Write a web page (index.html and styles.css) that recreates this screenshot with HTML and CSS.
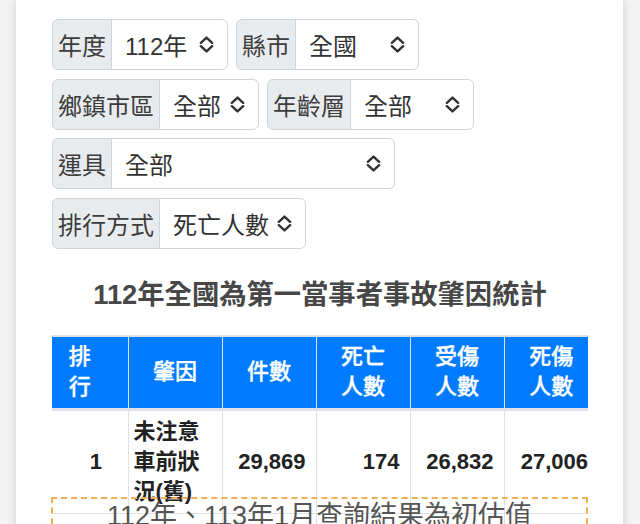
FILE: index.html
```html
<!DOCTYPE html>
<html lang="zh-Hant">
<head>
<meta charset="utf-8">
<title>事故肇因統計</title>
<link rel="stylesheet" href="styles.css">
</head>
<body>
<div class="panel">
  <div class="filters">
    <div class="ig">
      <span class="ig-label">年度</span>
      <div class="ig-select sel-year"><span>112年</span><svg class="chev" viewBox="0 0 16 18" width="15" height="17"><path d="M2 7.2 L8 1.6 L14 7.2 M2 10.8 L8 16.4 L14 10.8" fill="none" stroke="#333" stroke-width="2.6" stroke-linecap="round" stroke-linejoin="round"/></svg></div>
    </div>
    <div class="ig">
      <span class="ig-label">縣市</span>
      <div class="ig-select sel-city"><span>全國</span><svg class="chev" viewBox="0 0 16 18" width="15" height="17"><path d="M2 7.2 L8 1.6 L14 7.2 M2 10.8 L8 16.4 L14 10.8" fill="none" stroke="#333" stroke-width="2.6" stroke-linecap="round" stroke-linejoin="round"/></svg></div>
    </div>
    <div class="ig">
      <span class="ig-label">鄉鎮市區</span>
      <div class="ig-select sel-town"><span>全部</span><svg class="chev" viewBox="0 0 16 18" width="15" height="17"><path d="M2 7.2 L8 1.6 L14 7.2 M2 10.8 L8 16.4 L14 10.8" fill="none" stroke="#333" stroke-width="2.6" stroke-linecap="round" stroke-linejoin="round"/></svg></div>
    </div>
    <div class="ig">
      <span class="ig-label">年齡層</span>
      <div class="ig-select sel-age"><span>全部</span><svg class="chev" viewBox="0 0 16 18" width="15" height="17"><path d="M2 7.2 L8 1.6 L14 7.2 M2 10.8 L8 16.4 L14 10.8" fill="none" stroke="#333" stroke-width="2.6" stroke-linecap="round" stroke-linejoin="round"/></svg></div>
    </div>
    <div class="ig">
      <span class="ig-label">運具</span>
      <div class="ig-select sel-vehicle"><span>全部</span><svg class="chev" viewBox="0 0 16 18" width="15" height="17"><path d="M2 7.2 L8 1.6 L14 7.2 M2 10.8 L8 16.4 L14 10.8" fill="none" stroke="#333" stroke-width="2.6" stroke-linecap="round" stroke-linejoin="round"/></svg></div>
    </div>
    <div class="ig">
      <span class="ig-label">排行方式</span>
      <div class="ig-select sel-rank"><span>死亡人數</span><svg class="chev" viewBox="0 0 16 18" width="15" height="17"><path d="M2 7.2 L8 1.6 L14 7.2 M2 10.8 L8 16.4 L14 10.8" fill="none" stroke="#333" stroke-width="2.6" stroke-linecap="round" stroke-linejoin="round"/></svg></div>
    </div>
  </div>

  <h2 class="title">112年全國為第一當事者事故肇因統計</h2>

  <div class="table-area">
    <div class="table-scroll">
      <table class="stats">
        <colgroup>
          <col class="c-rank"><col class="c-cause"><col class="c-num"><col class="c-num"><col class="c-num"><col class="c-num">
        </colgroup>
        <thead>
          <tr>
            <th class="th-rank">排<br>行</th>
            <th>肇因</th>
            <th>件數</th>
            <th>死亡<br>人數</th>
            <th>受傷<br>人數</th>
            <th>死傷<br>人數</th>
          </tr>
        </thead>
        <tbody>
          <tr>
            <td class="rank">1</td>
            <td class="cause">未注意車前狀況(舊)</td>
            <td class="num">29,869</td>
            <td class="num">174</td>
            <td class="num">26,832</td>
            <td class="num">27,006</td>
          </tr>
          <tr class="row-next">
            <td></td><td></td><td></td><td></td><td></td><td></td>
          </tr>
        </tbody>
      </table>
    </div>
    <div class="notice">112年、113年1月查詢結果為初估值</div>
  </div>
</div>
</body>
</html>
```

FILE: styles.css
```css
* { box-sizing: border-box; }

html, body {
  margin: 0;
  height: 524px;
  overflow: hidden;
}

body {
  background: #f4f4f4;
  font-family: "Liberation Sans", "Noto Sans CJK TC", sans-serif;
  color: #333;
}

.panel {
  margin-left: 16px;
  width: 607px;
  min-height: 700px;
  background: #fff;
  box-shadow: 0 0 9px rgba(0, 0, 0, 0.16);
  padding: 19px 35px 0 36px;
}

.filters {
  display: flex;
  flex-wrap: wrap;
  gap: 8.67px 8px;
}

.ig {
  display: flex;
  height: 51px;
}

.ig-label {
  display: flex;
  align-items: center;
  padding: 0 5px;
  background: #e9ecef;
  border: 1px solid #ced4da;
  border-radius: 6px 0 0 6px;
  font-size: 24px;
  color: #3d3d3d;
  white-space: nowrap;
}

.ig-select {
  display: flex;
  align-items: center;
  justify-content: space-between;
  margin-left: -1px;
  padding: 0 13px 0 13px;
  background: #fff;
  border: 1px solid #ced4da;
  border-radius: 0 6px 6px 0;
  font-size: 24px;
  color: #333;
  white-space: nowrap;
}

.chev { flex: none; }

.sel-year { width: 117px; }
.sel-city { width: 124px; }
.sel-town { width: 100px; }
.sel-age { width: 124px; }
.sel-vehicle { width: 284px; }
.sel-rank { width: 147px; }

.title {
  margin: 30px 0 24px;
  font-size: 27.3px;
  line-height: 32px;
  font-weight: 700;
  color: #474747;
  text-align: center;
}

.table-area {
  position: relative;
}

.table-scroll {
  overflow: hidden;
  border-top: 2px solid #dee2e6;
}

.stats {
  border-collapse: collapse;
  table-layout: fixed;
  width: 546px;
}

.c-rank { width: 76px; }
.c-cause { width: 94px; }
.c-num { width: 94px; }

.stats th {
  background: #007bff;
  color: #fff;
  font-weight: 500;
  font-size: 22px;
  line-height: 30px;
  padding: 5px 4px 6px;
  text-align: center;
  border-left: 1px solid #dee2e6;
  border-bottom: 3px solid #dee2e6;
  -webkit-text-stroke: 0.35px #fff;
}

.stats th:first-child { border-left: none; }
.stats th.th-rank { padding-right: 24px; }

.stats td {
  font-size: 22px;
  line-height: 30px;
  font-weight: 700;
  color: #222;
  padding: 6px 10px 6px 5px;
  border-left: 1px solid #dee2e6;
  border-bottom: 1px solid #dee2e6;
  vertical-align: middle;
}

.stats td:first-child { border-left: none; }
.stats td.rank { text-align: center; padding-left: 18px; padding-right: 6px; }
.stats td.num { text-align: right; }
.stats .row-next td { height: 102px; }

.notice {
  position: absolute;
  top: 162px;
  left: -1px;
  right: 0;
  height: 80px;
  border: 2px dashed #f3ad55;
  font-size: 27px;
  line-height: 34px;
  color: #555;
  text-align: center;
}
```
